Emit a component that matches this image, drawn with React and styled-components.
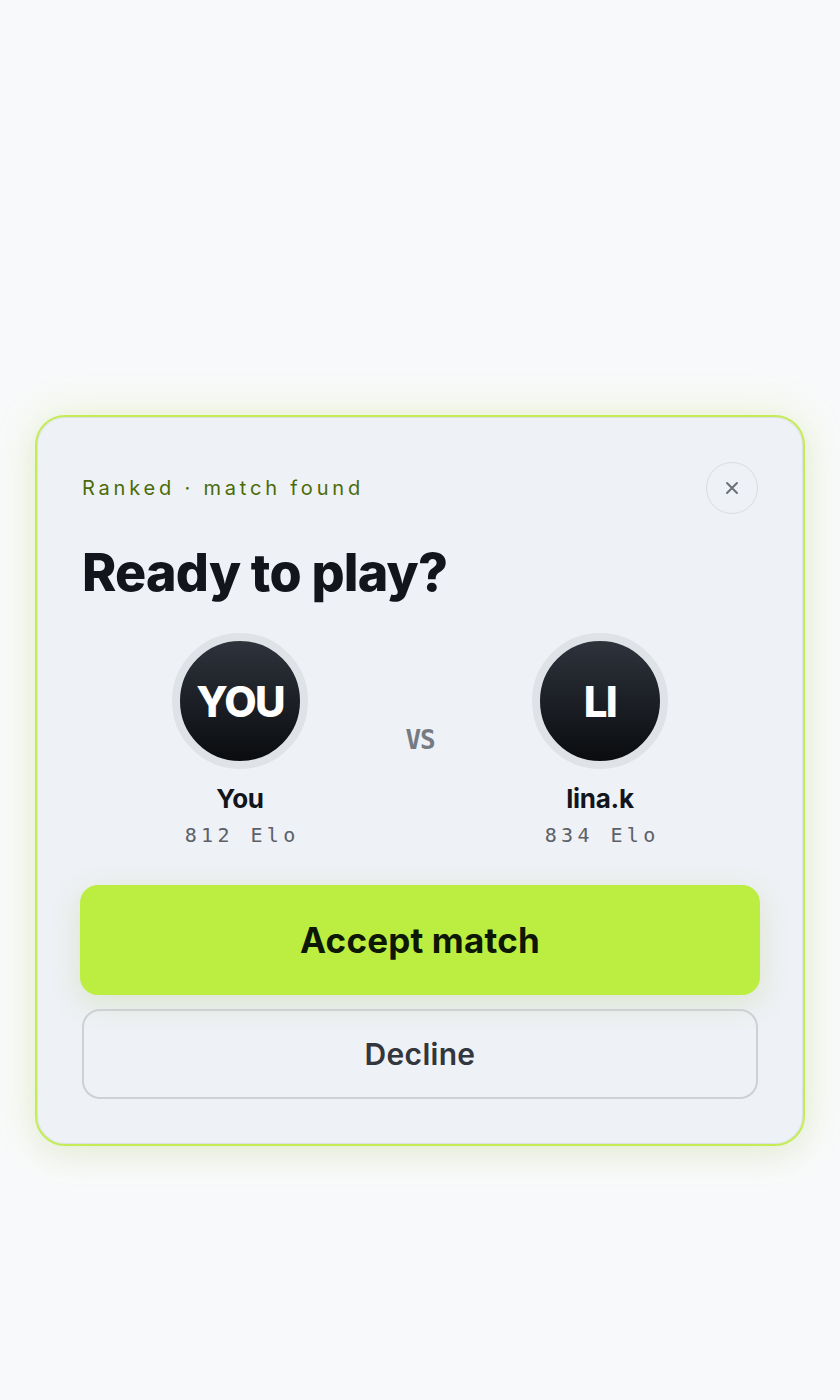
import React from 'react'
import styled, { createGlobalStyle } from 'styled-components'

const GlobalStyle = createGlobalStyle`
  html, body {
    margin: 0;
    padding: 0;
    background: #f8f9fa;
  }
  body {
    font-family: Inter, "Noto Sans", sans-serif;
    -webkit-font-smoothing: antialiased;
  }
`

const Page = styled.main`
  min-height: 1400px;
  box-sizing: border-box;
  padding: 415px 35px 0;
`

const Card = styled.section`
  box-sizing: border-box;
  width: 770px;
  background: #eef1f5;
  border: 2px solid #c4ec55;
  border-radius: 30px;
  padding: 45px 45px 45px;
  box-shadow:
    inset 0 0 0 1px #dde1e6,
    0 0 40px rgba(190, 235, 70, 0.22),
    0 10px 30px rgba(20, 30, 10, 0.05);
`

const TopRow = styled.header`
  display: flex;
  justify-content: space-between;
  align-items: center;
`

const Eyebrow = styled.span`
  font-size: 20px;
  letter-spacing: 0.19em;
  color: #4a6b08;
  font-weight: 400;
`

const CloseButton = styled.button`
  width: 52px;
  height: 52px;
  border-radius: 50%;
  border: 1.5px solid #d9dce1;
  background: transparent;
  display: flex;
  align-items: center;
  justify-content: center;
  padding: 0;
  color: #6b7079;
  cursor: pointer;
`

const Title = styled.h1`
  margin: 30px 0 0;
  font-size: 52px;
  font-weight: 800;
  letter-spacing: -0.015em;
  color: #12151b;
  line-height: 1.1;
`

const Matchup = styled.div`
  display: flex;
  justify-content: center;
  align-items: center;
  gap: 58px;
  margin-top: 32px;
`

const Player = styled.div`
  width: 200px;
  display: flex;
  flex-direction: column;
  align-items: center;
`

const Avatar = styled.div`
  width: 120px;
  height: 120px;
  border-radius: 50%;
  border: 8px solid #dfe2e7;
  background: linear-gradient(180deg, #2e333c 0%, #0a0c0f 100%);
  display: flex;
  align-items: center;
  justify-content: center;
  color: #fff;
  font-size: 42px;
  font-weight: 800;
  letter-spacing: -0.04em;
`

const Name = styled.div`
  margin-top: 14px;
  font-size: 26px;
  font-weight: 700;
  color: #12151b;
  letter-spacing: -0.01em;
`

const Elo = styled.div`
  margin-top: 9px;
  font-family: "DejaVu Sans Mono", "Liberation Mono", monospace;
  font-size: 20px;
  letter-spacing: 0.22em;
  margin-right: -0.22em;
  color: #5c6068;
`

const Versus = styled.div`
  width: 44px;
  text-align: center;
  font-family: "DejaVu Sans Mono", monospace;
  font-size: 26px;
  font-weight: 700;
  color: #767b83;
  letter-spacing: -0.04em;
`

const Actions = styled.div`
  display: flex;
  flex-direction: column;
  gap: 14px;
  margin-top: 38px;
`

const AcceptButton = styled.button`
  margin: 0 -2px;
  height: 110px;
  border: none;
  border-radius: 18px;
  background: #bcee42;
  color: #0d1703;
  font-family: inherit;
  font-size: 35px;
  font-weight: 700;
  letter-spacing: 0.005em;
  cursor: pointer;
  box-shadow: 0 8px 30px rgba(140, 180, 40, 0.18);
`

const DeclineButton = styled.button`
  height: 90px;
  border: 2px solid #cdd0d5;
  border-radius: 18px;
  background: transparent;
  color: #33363c;
  font-family: inherit;
  font-size: 30px;
  font-weight: 600;
  letter-spacing: 0.01em;
  cursor: pointer;
`

const players = [
  { initials: 'YOU', name: 'You', elo: 812 },
  { initials: 'LI', name: 'lina.k', elo: 834 }
]

const PlayerCard = ({ player }) => (
  <Player>
    <Avatar>{player.initials}</Avatar>
    <Name>{player.name}</Name>
    <Elo>{player.elo} Elo</Elo>
  </Player>
)

const App = () => (
  <>
    <GlobalStyle />
    <Page>
      <Card>
        <TopRow>
          <Eyebrow>Ranked · match found</Eyebrow>
          <CloseButton aria-label="Close">
            <svg width="14" height="14" viewBox="0 0 14 14">
              <path d="M2 2 L12 12 M12 2 L2 12" stroke="currentColor" strokeWidth="2" strokeLinecap="round" />
            </svg>
          </CloseButton>
        </TopRow>
        <Title>Ready to play?</Title>
        <Matchup>
          <PlayerCard player={players[0]} />
          <Versus>VS</Versus>
          <PlayerCard player={players[1]} />
        </Matchup>
        <Actions>
          <AcceptButton>Accept match</AcceptButton>
          <DeclineButton>Decline</DeclineButton>
        </Actions>
      </Card>
    </Page>
  </>
)

export default App
